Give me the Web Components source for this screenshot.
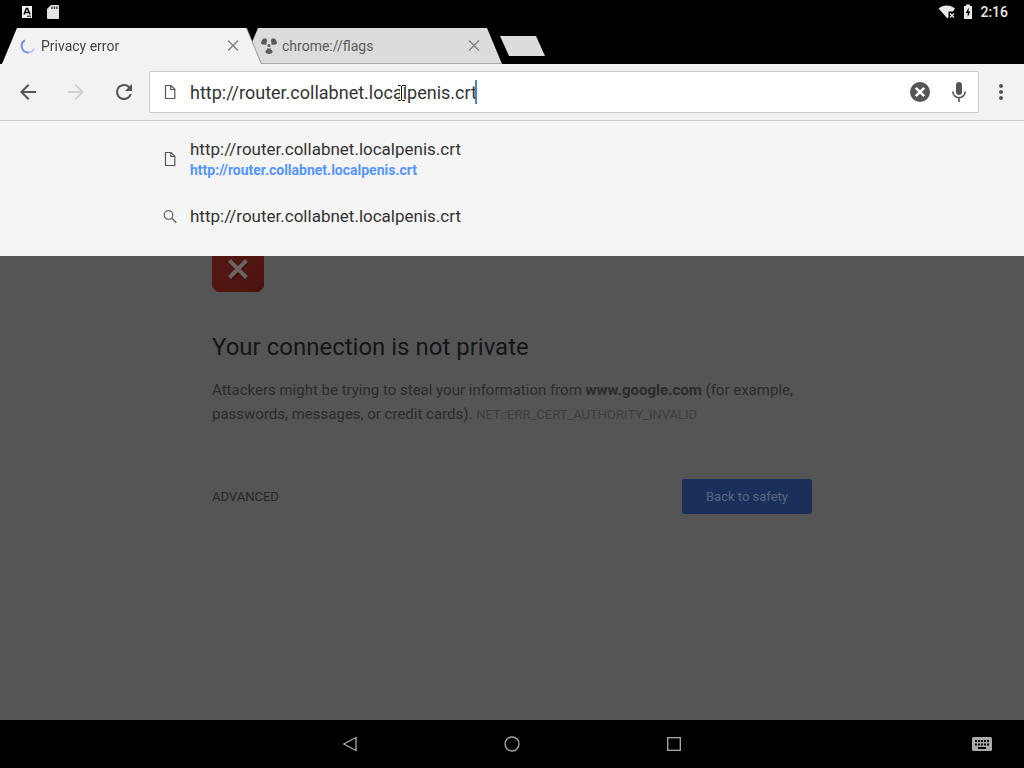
<!DOCTYPE html>
<html lang="en">
<head>
<meta charset="UTF-8">
<meta name="viewport" content="width=device-width, initial-scale=1.0">
<title>Privacy error</title>
<style>
  html, body {
    margin: 0;
    height: 100%;
  }
  body {
    display: flex;
    flex-direction: column;
    overflow: hidden;
    background: #000;
    font-family: Roboto, "Liberation Sans", sans-serif;
  }
  .viewport {
    flex: 1;
    min-height: 0;
    position: relative;
    overflow: hidden;
    background: #555;
  }
</style>
</head>
<body>
  <status-bar time="2:16"></status-bar>

  <tab-strip>
    <browser-tab active>
      <svg slot="icon" width="16" height="16" viewBox="0 0 16 16" fill="none" stroke-width="2">
        <path d="M9 14.4A6.5 6.5 0 0 1 5 2.3" stroke="#7b93dc"/>
        <path d="M14 10.5A6.5 6.5 0 0 1 8.5 14.5" stroke="#c3cdf0"/>
      </svg>
      Privacy error
    </browser-tab>
    <browser-tab>
      <svg slot="icon" width="18" height="18" viewBox="0 0 18 18" fill="#5c5c5c">
        <path d="M1 6.500C1 4 2.500 1.500 4.800 1.200Q6.800 1.200 7 3.500L6.400 7.500Q3 8.500 1 6.500Z"/>
        <path d="M17 6.500C17 4 15.500 1.500 13.200 1.200Q11.200 1.200 11 3.500L11.600 7.500Q15 8.500 17 6.500Z"/>
        <path d="M7.600 11.200L5.300 14.500Q5.500 16.800 9 16.900Q12.500 16.800 12.700 14.500L10.400 11.200C9.500 11.600 8.500 11.600 7.600 11.200Z"/>
        <circle cx="9" cy="8.500" r="1.600"/>
      </svg>
      chrome://flags
    </browser-tab>
  </tab-strip>

  <tool-bar>
    <omni-box value="http://router.collabnet.localpenis.crt"></omni-box>
  </tool-bar>

  <main class="viewport">
    <error-page host="www.google.com" code="NET::ERR_CERT_AUTHORITY_INVALID"></error-page>
    <suggestion-list>
      <suggestion-item icon="page" url="http://router.collabnet.localpenis.crt">http://router.collabnet.localpenis.crt</suggestion-item>
      <suggestion-item icon="search">http://router.collabnet.localpenis.crt</suggestion-item>
    </suggestion-list>
  </main>

  <nav-bar></nav-bar>

<script>
const PAGE_ICON = `
  <svg width="12" height="16" viewBox="0 0 12 16" fill="none" stroke="#555" stroke-width="1.200">
    <path d="M1.500 1.500H7L10.800 5.300V14.500H1.500Z"/>
    <path d="M6.800 1.500V5.500H10.800"/>
  </svg>`;

const SEARCH_ICON = `
  <svg width="14" height="14" viewBox="0 0 14 14" fill="none" stroke="#666">
    <circle cx="5.500" cy="6" r="4.300" stroke-width="1.200"/>
    <path d="M8.700 9.200L13.300 13.700" stroke-width="1.500"/>
  </svg>`;

class StatusBar extends HTMLElement {
    constructor() {
        super();
        this.attachShadow({ mode: 'open' });
    }

    connectedCallback() {
        this.shadowRoot.innerHTML = `
            <style>
              :host {
                display: flex;
                align-items: center;
                justify-content: space-between;
                height: 24px;
                padding: 0 16px 0 20px;
                background: #000;
                color: #e8e8e8;
                font-size: 14px;
                font-weight: 500;
              }
              div { display: flex; align-items: center; }
              .left { gap: 12px; }
              .right { gap: 5px; }
              svg { display: block; }
            </style>
            <div class="left">
              <svg width="14" height="14" viewBox="0 0 14 14">
                <rect x="2" y="1" width="10" height="12" fill="#eee"/>
                <path d="M4 9.500L6.400 3.500H7.600L10 9.500M5 7.500H9" fill="none" stroke="#000" stroke-width="1.500"/>
                <path d="M7 11.200H11" stroke="#000"/>
              </svg>
              <svg width="14" height="16" viewBox="0 0 14 16">
                <path d="M5 1H12Q13 1 13 2V14Q13 15 12 15H2Q1 15 1 14V5Z" fill="#e4e4e4"/>
                <path d="M6 2.500V5M8.500 2.500V5M11 2.500V5" stroke="#444" stroke-width="1.500"/>
              </svg>
            </div>
            <div class="right">
              <svg width="18" height="16" viewBox="0 0 18 16">
                <path d="M0.500 4.500C5 0.500 12.500 0.500 17 4.500L15 7.500H10.500V13L9.500 14.500Z" fill="#e8e8e8"/>
                <path d="M12 9.500L16 13.500M16 9.500L12 13.500" stroke="#e8e8e8" stroke-width="1.300"/>
              </svg>
              <svg width="14" height="16" viewBox="0 0 14 16">
                <path d="M5 0.500H9V2H11V15H3V2H5Z" fill="#e8e8e8"/>
                <path d="M7.800 3.500L4.800 9H6.700V13L9.400 7.500H7.600Z" fill="#000"/>
              </svg>
              <time>${this.getAttribute('time')}</time>
            </div>
        `;
    }
}

class TabStrip extends HTMLElement {
    constructor() {
        super();
        this.attachShadow({ mode: 'open' });
        this.shadowRoot.innerHTML = `
            <style>
              :host {
                display: flex;
                height: 36px;
                padding: 4px 0 0 2px;
                background: #000;
              }
              ::slotted(browser-tab) { margin-right: -19px; }
              button {
                width: 45px;
                height: 20px;
                margin: 8px 0 0 16px;
                padding: 0;
                border: 0;
                background: #dcdcdc;
                clip-path: polygon(0 0, 36px 0, 100% 100%, 9px 100%);
              }
            </style>
            <slot></slot>
            <button aria-label="New tab"></button>
        `;
    }
}

class BrowserTab extends HTMLElement {
    constructor() {
        super();
        this.attachShadow({ mode: 'open' });
        this.shadowRoot.innerHTML = `
            <style>
              :host {
                display: block;
                flex: 0 1 260px;
                min-width: 0;
                color: #5a5a5a;
                font-size: 14px;
              }
              :host([active]) {
                z-index: 1;
                color: #444;
                filter: drop-shadow(1px 0 0 #999);
              }
              .tab {
                display: flex;
                align-items: center;
                height: 36px;
                box-sizing: border-box;
                padding: 0 21px 0 17px;
                background: #dcdcdc;
                border-bottom: 1px solid #aaa;
                clip-path: polygon(15px 0, calc(100% - 16px) 0, calc(100% - 1px) 100%, 0 100%);
              }
              :host([active]) .tab {
                background: #f2f2f2;
                border-color: #f2f2f2;
              }
              .icon {
                display: flex;
                justify-content: center;
                width: 18px;
                margin-right: 4px;
              }
              .title {
                flex: 1;
                overflow: hidden;
                white-space: nowrap;
              }
              button {
                display: flex;
                padding: 2px;
                border: 0;
                background: none;
              }
            </style>
            <div class="tab">
              <span class="icon"><slot name="icon"></slot></span>
              <span class="title"><slot></slot></span>
              <button aria-label="Close tab">
                <svg width="12" height="12" viewBox="0 0 12 12" stroke="#808080" stroke-width="1.400">
                  <path d="M1 0.500L11 10.500M11 0.500L1 10.500"/>
                </svg>
              </button>
            </div>
        `;
    }
}

class ToolBar extends HTMLElement {
    constructor() {
        super();
        this.attachShadow({ mode: 'open' });
        this.shadowRoot.innerHTML = `
            <style>
              :host {
                display: flex;
                align-items: center;
                height: 56px;
                padding-left: 4px;
                background: #f2f2f2;
                border-bottom: 1px solid #ccc;
              }
              button {
                display: flex;
                justify-content: center;
                width: 48px;
                padding: 0;
                border: 0;
                background: none;
                fill: #555;
              }
              button:disabled { fill: #d2d2d2; }
              .menu { width: 46px; }
              ::slotted(omni-box) { flex: 1; margin-left: 2px; }
            </style>
            <button aria-label="Back">
              <svg width="24" height="24" viewBox="0 0 24 24"><path d="M20 11H7.830l5.590-5.590L12 4l-8 8 8 8 1.410-1.410L7.830 13H20v-2z"/></svg>
            </button>
            <button aria-label="Forward" disabled>
              <svg width="24" height="24" viewBox="0 0 24 24"><path d="M12 4l-1.410 1.410L16.170 11H4v2h12.170l-5.580 5.590L12 20l8-8z"/></svg>
            </button>
            <button aria-label="Reload">
              <svg width="24" height="24" viewBox="0 0 24 24"><path d="M17.650 6.350A7.950 7.950 0 0 0 12 4a8 8 0 1 0 7.730 10h-2.080A6 6 0 1 1 12 6c1.660 0 3.140.690 4.220 1.780L13 11h7V4l-2.350 2.350z"/></svg>
            </button>
            <slot></slot>
            <button class="menu" aria-label="Menu">
              <svg width="24" height="24" viewBox="0 0 24 24">
                <circle cx="12" cy="6" r="2"/><circle cx="12" cy="12" r="2"/><circle cx="12" cy="18" r="2"/>
              </svg>
            </button>
        `;
    }
}

class OmniBox extends HTMLElement {
    constructor() {
        super();
        this.attachShadow({ mode: 'open' });
    }

    connectedCallback() {
        this.shadowRoot.innerHTML = `
            <style>
              :host {
                display: flex;
                align-items: center;
                height: 40px;
                background: #fff;
                border-radius: 1px;
                box-shadow: 0 0 0 1px #ccc, 0 1px 0 0 #aaa;
                min-width: 0;
              }
              .icon {
                display: flex;
                justify-content: center;
                width: 40px;
              }
              .field {
                display: flex;
                flex: 1;
                align-items: center;
                min-width: 0;
                position: relative;
              }
              input {
                field-sizing: content;
                min-width: 0;
                height: 32px;
                padding: 0;
                border: 0;
                outline: 0;
                background: none;
                color: #333;
                font: 18px Roboto, "Liberation Sans", sans-serif;
                caret-color: transparent;
              }
              .caret {
                width: 2px;
                height: 24px;
                margin-left: -2px;
                background: #4a86c0;
              }
              /* mouse pointer over the text */
              .pointer {
                position: absolute;
                left: 208px;
                top: 8px;
              }
              button {
                display: flex;
                justify-content: center;
                width: 40px;
                padding: 0;
                border: 0;
                background: none;
              }
              button:last-child { width: 38px; }
            </style>
            <span class="icon">${PAGE_ICON}</span>
            <div class="field">
              <input type="text" aria-label="Search or type URL" spellcheck="false" value="${this.getAttribute('value')}">
              <span class="caret"></span>
              <svg class="pointer" width="7" height="18" viewBox="0 0 7 18" fill="none">
                <path d="M0 1.500H2.500L3.500 2.500L4.500 1.500H7M0 16.500H2.500L3.500 15.500L4.500 16.500H7M3.500 2V16" stroke="#fff" stroke-width="3"/>
                <path d="M0 1.500H2.500L3.500 2.500L4.500 1.500H7M0 16.500H2.500L3.500 15.500L4.500 16.500H7M3.500 2V16" stroke="#111"/>
              </svg>
            </div>
            <button aria-label="Clear input">
              <svg width="20" height="20" viewBox="0 0 20 20">
                <circle cx="10" cy="10" r="10" fill="#555"/>
                <path d="M5.800 5.800L14.200 14.200M14.200 5.800L5.800 14.200" stroke="#fff" stroke-width="2.600"/>
              </svg>
            </button>
            <button aria-label="Voice search">
              <svg width="24" height="24" viewBox="0 0 24 24">
                <rect x="9" y="2" width="6" height="13" rx="3" fill="#555"/>
                <path d="M5.800 11.500A6.200 6.200 0 0 0 18.200 11.500M12 17.700V22" fill="none" stroke="#555" stroke-width="1.600"/>
              </svg>
            </button>
        `;
    }
}

class SuggestionList extends HTMLElement {
    constructor() {
        super();
        this.attachShadow({ mode: 'open' });
        this.shadowRoot.innerHTML = `
            <style>
              /* drops down over the page */
              :host {
                display: block;
                position: absolute;
                top: 0;
                left: 0;
                right: 0;
                padding: 4px 0 16px;
                background: #f5f5f5;
              }
            </style>
            <slot></slot>
        `;
    }
}

class SuggestionItem extends HTMLElement {
    constructor() {
        super();
        this.attachShadow({ mode: 'open' });
    }

    connectedCallback() {
        const url = this.getAttribute('url');
        const icon = this.getAttribute('icon') === 'search' ? SEARCH_ICON : PAGE_ICON;

        this.shadowRoot.innerHTML = `
            <style>
              :host {
                display: flex;
                align-items: center;
                padding: 12px 0 12px 150px;
              }
              .icon {
                display: flex;
                justify-content: center;
                width: 40px;
              }
              .title {
                color: #333;
                font-size: 17px;
                line-height: 24px;
              }
              a {
                display: block;
                color: #5595fe;
                font-size: 14px;
                font-weight: 700;
                line-height: 19px;
                text-decoration: none;
              }
            </style>
            <span class="icon">${icon}</span>
            <div>
              <div class="title"><slot></slot></div>
              ${url ? `<a href="${url}">${url}</a>` : ''}
            </div>
        `;
    }
}

class ErrorPage extends HTMLElement {
    constructor() {
        super();
        this.attachShadow({ mode: 'open' });
    }

    connectedCallback() {
        this.shadowRoot.innerHTML = `
            <style>
              :host {
                display: block;
                max-width: 600px;
                margin: 0 auto;
                padding-top: 119px;
                color: #2b2b2b;
                font-size: 15px;
                line-height: 24px;
              }
              .badge { display: block; }
              h1 {
                margin: 40px 0 16px;
                color: #151515;
                font-size: 24px;
                font-weight: 400;
                line-height: 30px;
              }
              p { margin: 0; }
              .code {
                color: #3e3e3e;
                font-size: 13px;
              }
              .actions {
                display: flex;
                align-items: center;
                justify-content: space-between;
                margin-top: 52px;
              }
              a {
                color: #252525;
                font-size: 13px;
                text-decoration: none;
              }
              button {
                height: 35px;
                padding: 0 24px;
                border: 0;
                border-radius: 2px;
                background: #1a2f5a;
                color: #596680;
                font: 13px Roboto, "Liberation Sans", sans-serif;
              }
            </style>
            <svg class="badge" width="52" height="52" viewBox="0 0 52 52">
              <defs>
                <linearGradient id="red" x1="0" y1="0" x2="1" y2="1">
                  <stop offset="0.400" stop-color="#531713"/>
                  <stop offset="1" stop-color="#4a120e"/>
                </linearGradient>
              </defs>
              <path d="M0 0H52V47L47 52H5L0 47Z" fill="url(#red)"/>
              <path d="M18 21L34 37M34 21L18 37" stroke="#3a0c09" stroke-width="5" transform="translate(1 1)"/>
              <path d="M17.500 20.500L34.500 37.500M34.500 20.500L17.500 37.500" stroke="#6c6260" stroke-width="4"/>
            </svg>
            <h1>Your connection is not private</h1>
            <p>Attackers might be trying to steal your information from <strong>${this.getAttribute('host')}</strong> (for example, passwords, messages, or credit cards). <span class="code">${this.getAttribute('code')}</span></p>
            <div class="actions">
              <a href="#advanced">ADVANCED</a>
              <button>Back to safety</button>
            </div>
        `;
    }
}

class NavBar extends HTMLElement {
    constructor() {
        super();
        this.attachShadow({ mode: 'open' });
        this.shadowRoot.innerHTML = `
            <style>
              :host {
                display: grid;
                grid-template-columns: 1fr auto 1fr;
                align-items: center;
                height: 48px;
                background: #000;
              }
              .keys {
                display: flex;
                grid-column: 2;
              }
              button {
                display: flex;
                justify-content: center;
                width: 162px;
                padding: 0;
                border: 0;
                background: none;
              }
              .keyboard {
                width: 84px;
                justify-self: end;
              }
            </style>
            <div class="keys">
              <button aria-label="Back">
                <svg width="18" height="18" viewBox="0 0 18 18" fill="none" stroke="#aaa" stroke-width="1.300"><path d="M15 2.500V15.500L2.800 9Z"/></svg>
              </button>
              <button aria-label="Home">
                <svg width="18" height="18" viewBox="0 0 18 18" fill="none" stroke="#aaa" stroke-width="1.300"><circle cx="9" cy="9" r="7"/></svg>
              </button>
              <button aria-label="Overview">
                <svg width="18" height="18" viewBox="0 0 18 18" fill="none" stroke="#aaa" stroke-width="1.300"><rect x="2.700" y="2.700" width="12.600" height="12.600"/></svg>
              </button>
            </div>
            <button class="keyboard" aria-label="Change keyboard">
              <svg width="20" height="14" viewBox="0 0 20 14">
                <rect width="20" height="14" rx="1.500" fill="#aaa"/>
                <path d="M3 4H17M3 7.500H17" stroke="#000" stroke-width="2" stroke-dasharray="2 1"/>
                <path d="M6 11H14" stroke="#000" stroke-width="2"/>
              </svg>
            </button>
        `;
    }
}

customElements.define('status-bar', StatusBar);
customElements.define('tab-strip', TabStrip);
customElements.define('browser-tab', BrowserTab);
customElements.define('tool-bar', ToolBar);
customElements.define('omni-box', OmniBox);
customElements.define('suggestion-list', SuggestionList);
customElements.define('suggestion-item', SuggestionItem);
customElements.define('error-page', ErrorPage);
customElements.define('nav-bar', NavBar);
</script>
</body>
</html>
